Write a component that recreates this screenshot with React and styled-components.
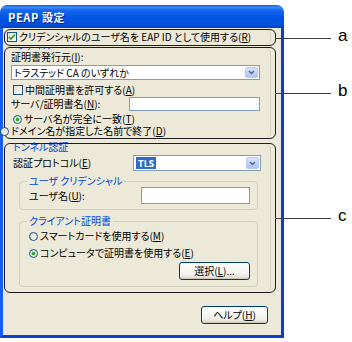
import React from 'react';
import styled, { createGlobalStyle } from 'styled-components';

// XP style "PEAP 設定" dialog with three annotated callout frames (a, b, c)

const GlobalStyle = createGlobalStyle`
    * { box-sizing: border-box; }
    html, body { margin: 0; background: #ffffff; }
    body {
        font-family: "Noto Sans CJK JP", "Noto Sans", sans-serif;
        font-size: 10px;
        color: #000;
        font-feature-settings: "palt";
    }
`

const Page = styled.div`
    width: 352px;
    height: 342px;
    padding-top: 5px;
    overflow: hidden;
`

const Window = styled.div`
    width: 284px;
    height: 333px;
    display: flex;
    flex-direction: column;
`

const TitleBar = styled.div`
    height: 23px;
    border-radius: 7px 7px 0 0;
    background: linear-gradient(
        to bottom,
        #0a5ae6 0%,
        #3f8cf9 10%,
        #1a66ee 22%,
        #0055e5 55%,
        #0050dc 85%,
        #003fc4 100%
    );
    color: #fff;
    font-weight: bold;
    font-size: 11px;
    letter-spacing: 0.6px;
    display: flex;
    align-items: center;
    padding: 1px 0 0 8px;
    text-shadow: 1px 1px 0 #0b2a8a;
`

const Frame = styled.div`
    flex: 1;
    display: flex;
    flex-direction: column;
    background: #ece9d8;
    border: 3px solid #0055e5;
    border-top: none;
    border-left-color: #1560e8;
    border-right-color: #0a3fd0;
    border-bottom-color: #0a3fd0;
    padding: 1px 5px 0 1px;
`

const Callout = styled.div`
    position: relative;
    height: ${p => p.$h}px;
    margin-top: ${p => p.$mt || 0}px;
    border: 1.5px solid #1c1c1c;
    border-radius: 6px;
    padding: ${p => p.$pad || '0'};
    display: flex;
    flex-direction: column;
    box-shadow: inset -4px 0 0 #ece9d8, inset -5px 0 0 #d8d4c4;
`

const Pointer = styled.div`
    position: absolute;
    left: 100%;
    top: 50%;
    width: 56px;
    height: 1px;
    background: #404040;
`

const Tag = styled.span`
    position: absolute;
    left: 63px;
    top: -12px;
    font-family: "Liberation Sans", Arial, sans-serif;
    font-size: 17px;
    line-height: 20px;
    color: #000;
`

const Row = styled.div`
    display: flex;
    align-items: center;
    height: ${p => p.$h || 12}px;
    margin-top: ${p => p.$mt || 0}px;
    margin-left: ${p => p.$ml || 0}px;
    line-height: 12px;
    white-space: nowrap;
`

const Label = styled.span`
    flex: 1;
`

const Legend = styled.div`
    height: 10px;
    line-height: 10px;
    color: #0046d5;
    margin-top: -2px;
    padding-left: ${p => p.$pl || 0}px;
    white-space: nowrap;
`

const CutLegend = styled.div`
    height: 3px;
    overflow: hidden;
    color: #0046d5;
    padding-left: 7px;
    line-height: 12px;
    span { display: block; margin-top: -9px; }
`

const Group = styled.fieldset`
    margin: ${p => p.$mt}px 17px 0 6px;
    padding: 0 7px ${p => p.$pb || 5}px 9px;
    border: 1px solid #d0d0bf;
    border-radius: 4px;
    display: flex;
    flex-direction: column;
    min-width: 0;

    legend {
        color: #0046d5;
        line-height: 10px;
        height: 10px;
        padding: 0 2px;
        margin-left: -2px;
    }
`

const Combo = styled.div`
    display: flex;
    align-items: center;
    height: ${p => p.$h}px;
    width: ${p => p.$w ? `${p.$w}px` : 'auto'};
    margin-top: ${p => p.$mt || 0}px;
    margin-right: ${p => p.$mr || 0}px;
    background: #fff;
    border: 1px solid #7f9db9;
    padding: 0 1px 0 2px;
    line-height: 12px;
`

const ComboText = styled.span`
    flex: 1;
    white-space: nowrap;
    overflow: hidden;
`

const Selected = styled.span`
    background: #316ac5;
    color: #fff;
    padding: 0 2px;
    font-size: 9px;
    font-weight: bold;
    line-height: 11px;
`

const DropButton = styled.div`
    width: 13px;
    height: calc(100% - 2px);
    display: flex;
    align-items: center;
    justify-content: center;
    border: 1px solid #b5c8f4;
    border-radius: 2px;
    background: linear-gradient(to bottom, #dbe6fd, #bdd0fb 60%, #b0c6f6);
`

const TextBox = styled.div`
    width: ${p => p.$w}px;
    height: ${p => p.$h}px;
    background: #fff;
    border: 1px solid #7f9db9;
`

const Check = styled.span`
    width: 10px;
    height: 10px;
    flex: none;
    border: 1px solid #1c5180;
    background: linear-gradient(135deg, #dcdcd6, #ffffff);
    display: flex;
    align-items: center;
    justify-content: center;
    margin-right: 2px;
`

const Radio = styled.span`
    width: 9px;
    height: 9px;
    flex: none;
    border: 1px solid #1c5180;
    border-radius: 50%;
    background: linear-gradient(135deg, #dcdcd6, #ffffff);
    display: flex;
    align-items: center;
    justify-content: center;
    margin-right: 2px;

    &::after {
        content: '';
        display: ${p => p.$on ? 'block' : 'none'};
        width: 3px;
        height: 3px;
        border-radius: 50%;
        background: #2aa32a;
        box-shadow: 0 0 0 0.5px #6ccf6c;
    }
`

const Button = styled.div`
    width: ${p => p.$w}px;
    height: 18px;
    margin-top: ${p => p.$mt || 0}px;
    margin-right: ${p => p.$mr || 0}px;
    align-self: flex-end;
    display: flex;
    align-items: center;
    justify-content: center;
    border: 1px solid #003c74;
    border-radius: 3px;
    background: linear-gradient(to bottom, #ffffff, #f2f1ec 70%, #dcd8cc);
    box-shadow: inset 0 -1px 0 #cdc7b8, inset 0 0 0 1px #fafafa;
    line-height: 12px;
`

const U = styled.span`
    text-decoration: underline;
`

const CheckMark = () => (
    <svg width="8" height="8" viewBox="0 0 8 8">
        <path d="M1 4 L3 6 L7 1.5" fill="none" stroke="#21a121" strokeWidth="1.7" />
    </svg>
)

const Chevron = () => (
    <svg width="7" height="5" viewBox="0 0 7 5">
        <path d="M1 1 L3.5 3.5 L6 1" fill="none" stroke="#4d6185" strokeWidth="1.4" />
    </svg>
)

const App = () => {
    return (
        <Page>
            <GlobalStyle />
            <Window>
                <TitleBar>PEAP 設定</TitleBar>
                <Frame>
                    <Callout $h={17} $pad="0 0 0 2px">
                        <Row $h={14}>
                            <Check><CheckMark /></Check>
                            クリデンシャルのユーザ名を EAP ID として使用する(<U>R</U>)
                        </Row>
                        <Pointer><Tag>a</Tag></Pointer>
                    </Callout>

                    <Callout $h={92} $mt={1} $pad="0 0 0 6px">
                        <CutLegend><span>ファイル</span></CutLegend>
                        <Row>証明書発行元(<U>I</U>):</Row>
                        <Combo $h={15} $mt={2} $mr={15}>
                            <ComboText>トラステッド CA のいずれか</ComboText>
                            <DropButton><Chevron /></DropButton>
                        </Combo>
                        <Row $mt={4} $ml={2}>
                            <Check />
                            中間証明書を許可する(<U>A</U>)
                        </Row>
                        <Row $h={14} $mt={1}>
                            <Label>サーバ/証明書名(<U>N</U>):</Label>
                            <TextBox $w={131} $h={14} style={{ marginRight: 15 }} />
                        </Row>
                        <Row $mt={2} $ml={2}>
                            <Radio $on />
                            サーバ名が完全に一致(<U>T</U>)
                        </Row>
                        <Row $ml={-11}>
                            <Radio />
                            ドメイン名が指定した名前で終了(<U>D</U>)
                        </Row>
                        <Pointer><Tag>b</Tag></Pointer>
                    </Callout>

                    <Callout $h={150} $mt={4} $pad="0 0 0 8px">
                        <Legend $pl={0}>トンネル認証</Legend>
                        <Row $h={16} $mt={3}>
                            <Label>認証プロトコル(<U>E</U>)</Label>
                            <Combo $h={16} $w={128} $mr={14}>
                                <ComboText><Selected>TLS</Selected></ComboText>
                                <DropButton><Chevron /></DropButton>
                            </Combo>
                        </Row>
                        <Group $mt={5}>
                            <legend>ユーザ クリデンシャル</legend>
                            <Row $h={17} $mt={1}>
                                <Label>ユーザ名(<U>U</U>):</Label>
                                <TextBox $w={109} $h={17} />
                            </Row>
                        </Group>
                        <Group $mt={6} $pb={6}>
                            <legend>クライアント証明書</legend>
                            <Row $mt={4}>
                                <Radio />
                                スマートカードを使用する(<U>M</U>)
                            </Row>
                            <Row $mt={5}>
                                <Radio $on />
                                コンピュータで証明書を使用する(<U>E</U>)
                            </Row>
                            <Button $w={71} $mt={3}>選択(<U>L</U>)...</Button>
                        </Group>
                        <Pointer><Tag>c</Tag></Pointer>
                    </Callout>

                    <Button $w={67} $mt={13} $mr={8}>ヘルプ(<U>H</U>)</Button>
                </Frame>
            </Window>
        </Page>
    );
}

export default App;
